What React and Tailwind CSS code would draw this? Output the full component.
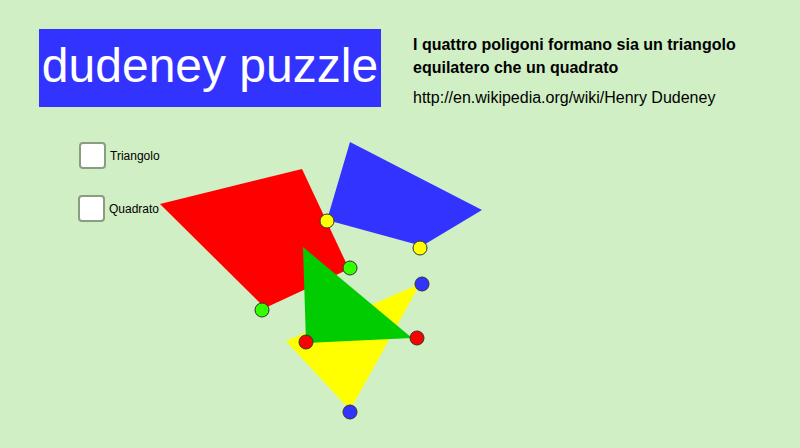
import React from 'react';

const DOTS = [
  { x: 327, y: 221, c: '#ffff00' },
  { x: 420, y: 248, c: '#ffff00' },
  { x: 350, y: 268, c: '#33ff00' },
  { x: 262, y: 310, c: '#33ff00' },
  { x: 422, y: 284, c: '#3333ff' },
  { x: 350, y: 412, c: '#3333ff' },
  { x: 306, y: 342, c: '#ff0000' },
  { x: 417, y: 338, c: '#ff0000' },
];

function Check({ label }) {
  return (
    <label className="flex items-center gap-[4px]">
      <span className="block w-[27px] h-[27px] rounded-[4px] border-2 border-[#8a9c82] bg-white" />
      <span className="text-[12px] text-black">{label}</span>
    </label>
  );
}

export default function App() {
  return (
    <div className="relative w-[800px] h-[448px] overflow-hidden bg-[#d1efc4]" style={{ fontFamily: '"Liberation Sans", Arial, sans-serif' }}>
      <div className="flex items-start h-[107px] pt-[29px] pl-[39px]">
        <div className="w-[342px] h-[78px] bg-[#3333ff] flex items-center justify-center">
          <span className="text-white text-[48px] leading-none pb-[4px]">dudeney puzzle</span>
        </div>
        <div className="ml-[32px] mt-[4px] text-[16px] leading-[23px] text-black">
          <p className="font-bold">I quattro poligoni formano sia un triangolo<br />equilatero che un quadrato</p>
          <p className="mt-[7px]">http://en.wikipedia.org/wiki/Henry Dudeney</p>
        </div>
      </div>

      <div className="flex flex-col gap-[27px] mt-[35px] pl-[79px]">
        <Check label="Triangolo" />
        <div className="-ml-[1px] -mt-[1px]">
          <Check label="Quadrato" />
        </div>
      </div>

      <svg className="absolute inset-0" width="800" height="448" viewBox="0 0 800 448">
        <polygon points="160,204 302,169 349,269 265,308" fill="#ff0000" />
        <polygon points="350,142 482,210 422,246 327,220" fill="#3333ff" />
        <polygon points="286,341 420,284 350,410" fill="#ffff00" />
        <polygon points="303,247 412,338 306,343" fill="#00cc00" />
        {DOTS.map((d, i) => (
          <circle key={i} cx={d.x} cy={d.y} r="7" fill={d.c} stroke="#333" strokeWidth="1" />
        ))}
      </svg>
    </div>
  );
}
